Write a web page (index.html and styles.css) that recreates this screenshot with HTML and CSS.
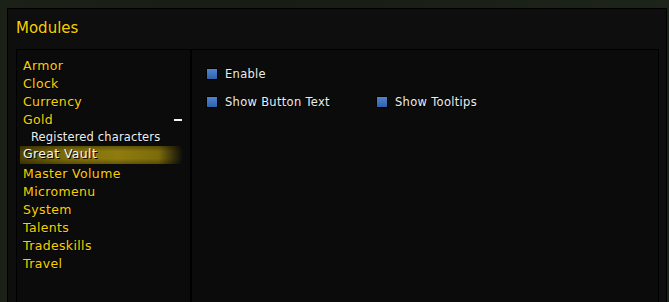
FILE: index.html
```html
<!DOCTYPE html>
<html lang="en">
<head>
    <meta charset="UTF-8">
    <meta name="viewport" content="width=device-width, initial-scale=1.0">
    <title>Modules</title>
    <link rel="stylesheet" href="styles.css">
</head>
<body>
    <div class="frame">
        <h1 class="title">Modules</h1>

        <div class="panels">
            <ul class="module-list">
                <li>Armor</li>
                <li>Clock</li>
                <li>Currency</li>
                <li class="has-children">Gold <span class="collapse"></span></li>
                <li class="child">Registered characters</li>
                <li class="selected">Great Vault</li>
                <li>Master Volume</li>
                <li>Micromenu</li>
                <li>System</li>
                <li>Talents</li>
                <li>Tradeskills</li>
                <li>Travel</li>
            </ul>

            <div class="options">
                <div class="option-row">
                    <label class="check"><span class="box"></span>Enable</label>
                </div>
                <div class="option-row">
                    <label class="check wide"><span class="box"></span>Show Button Text</label>
                    <label class="check"><span class="box"></span>Show Tooltips</label>
                </div>
            </div>
        </div>
    </div>
</body>
</html>
```

FILE: styles.css
```css
body {
    margin: 0;
    height: 302px;
    overflow: hidden;
    font-family: "DejaVu Sans", sans-serif;
    background-color: #151a13;
    background-image: linear-gradient(to right, #1b2117 0%, #171c15 40%, #1d2419 100%);
}

.frame {
    margin: 8px 0 0 7px;
    width: 658px;
    height: 293px;
    border: 1px solid #000;
    border-bottom: none;
    background-color: #0e0e0e;
}

.title {
    margin: 0;
    padding: 10px 0 0 8px;
    font-size: 15px;
    font-weight: normal;
    line-height: 18px;
    color: #f8d000;
    text-shadow: 1px 1px 0 #000;
}

.panels {
    display: flex;
    margin: 12px 0 0 8px;
    width: 643px;
    height: 253px;
}

.module-list {
    list-style: none;
    margin: 0;
    padding: 7px 0 0 0;
    width: 173px;
    border: 1px solid #000;
    border-bottom: none;
    background-color: #0b0b0b;
}

.module-list li {
    position: relative;
    padding-left: 6px;
    font-size: 12.5px;
    letter-spacing: 0.35px;
    line-height: 18px;
    height: 18px;
    color: #f8cf00;
    text-shadow: 1px 1px 0 #000;
}

.module-list li.child {
    padding-left: 14px;
    font-size: 11.5px;
    letter-spacing: 0.15px;
    height: 17px;
    line-height: 17px;
    color: #eeeeee;
}

.module-list li.selected {
    margin: 0 7px 1px 3px;
    padding: 0 0 0 3px;
    height: 18px;
    line-height: 15px;
    color: #f6f6f6;
    background-image:
        linear-gradient(to bottom, rgba(0, 0, 0, 0.3), rgba(0, 0, 0, 0) 30%, rgba(0, 0, 0, 0) 70%, rgba(0, 0, 0, 0.3)),
        linear-gradient(to right, #4e4204 0%, #80700a 30%, #8f7c0f 60%, #7c6b0a 85%, rgba(14, 14, 14, 0) 100%);
}

.collapse {
    position: absolute;
    left: 157px;
    top: 8px;
    width: 8px;
    height: 2px;
    background-color: #f2f2f2;
}

.options {
    flex: 1;
    border: 1px solid #000;
    border-bottom: none;
    background-color: #0b0b0b;
    padding: 18px 0 0 14px;
}

.option-row {
    display: flex;
    height: 28px;
}

.check {
    display: flex;
    align-items: flex-start;
    font-size: 11.5px;
    letter-spacing: 0.3px;
    line-height: 13px;
    color: #ececec;
    text-shadow: 1px 1px 0 #000;
}

.check.wide {
    width: 170px;
}

.box {
    width: 10px;
    height: 10px;
    margin: 0 7px 0 0;
    border: 1px solid #000;
    background-image: linear-gradient(to bottom, #4f86cf, #2f62aa);
}
```
